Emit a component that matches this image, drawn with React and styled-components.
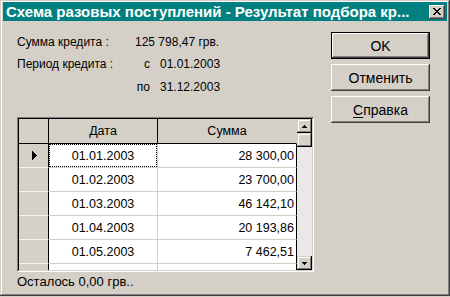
import React from "react";
import styled, { createGlobalStyle } from "styled-components";

const FONT = `"Liberation Sans", Arial, sans-serif`;

const Global = createGlobalStyle`
  html, body { margin: 0; padding: 0; background: #d4d0c8; }
  body { font-family: ${FONT}; }
`;

const Window = styled.div`
  width: 450px;
  height: 296px;
  box-sizing: border-box;
  background: #d4d0c8;
  padding: 2px 3px 3px 3px;
  box-shadow: inset -1px -1px #404040, inset 1px 1px #d4d0c8,
    inset -2px -2px #808080, inset 2px 2px #ffffff;
  display: flex;
  flex-direction: column;
  font-family: ${FONT};
  font-size: 12px;
  color: #000;
`;

const Caption = styled.div`
  height: 19px;
  flex: none;
  background: #008080;
  display: flex;
  align-items: center;
  padding-left: 3px;
  color: #fff;
  font-weight: bold;
  font-size: 15px;
  white-space: nowrap;
`;

const CaptionText = styled.span`
  flex: 1;
  overflow: hidden;
`;

const CloseBox = styled.div`
  width: 16px;
  height: 14px;
  margin-right: 2px;
  box-sizing: border-box;
  background: #d4d0c8;
  box-shadow: inset -1px -1px #404040, inset 1px 1px #ffffff,
    inset -2px -2px #808080;
  display: flex;
  align-items: center;
  justify-content: center;
`;

const Body = styled.div`
  flex: 1;
  display: flex;
`;

const LeftCol = styled.div`
  width: 297px;
  margin-left: 14px;
  display: flex;
  flex-direction: column;
`;

const Info = styled.div`
  margin-top: 14px;
  display: grid;
  grid-template-columns: 118px 15px 1fr;
  grid-template-rows: 22px 23px 14px;
  line-height: 14px;
  font-size: 12px;
  white-space: nowrap;
`;

const Label = styled.div`
  grid-column: 1;
`;

const Value = styled.div`
  grid-column: ${(p) => p.$col};
  text-align: ${(p) => (p.$right ? "right" : "left")};
  padding-left: ${(p) => p.$pad || 0}px;
`;

const Frame = styled.div`
  margin-top: 23px;
  height: 155px;
  box-sizing: border-box;
  border: 1px solid;
  border-color: #808080 #ffffff #ffffff #808080;
`;

const FrameInner = styled.div`
  height: 100%;
  box-sizing: border-box;
  border: 1px solid;
  border-color: #000000 #d4d0c8 #d4d0c8 #000000;
  display: flex;
  overflow: hidden;
`;

const Table = styled.div`
  display: grid;
  grid-template-columns: 30px 109px 139px;
  grid-auto-rows: 24px;
  grid-template-rows: 25px;
  align-content: start;
  overflow: hidden;
  font-size: 12.5px;
`;

const HeadCell = styled.div`
  box-sizing: border-box;
  background: #d4d0c8;
  border-right: 1px solid ${(p) => (p.$last ? "transparent" : "#000")};
  border-bottom: 1px solid #000;
  display: flex;
  align-items: center;
  justify-content: center;
  padding-bottom: 1px;
`;

const IndCell = styled.div`
  box-sizing: border-box;
  background: #d4d0c8;
  border-right: 1px solid #000;
  border-bottom: 1px solid #f4f3f0;
  display: flex;
  align-items: center;
  justify-content: center;
  padding-left: 1px;
`;

const Cell = styled.div`
  position: relative;
  box-sizing: border-box;
  background: #fff;
  border-right: 1px solid ${(p) => (p.$last ? "#000" : "#d4d0c8")};
  border-bottom: 1px solid #d4d0c8;
  display: flex;
  align-items: center;
  justify-content: ${(p) => (p.$right ? "flex-end" : "center")};
  padding-right: ${(p) => (p.$right ? 2 : 0)}px;
  white-space: nowrap;
  &::after {
    content: "";
    display: ${(p) => (p.$focus ? "block" : "none")};
    position: absolute;
    inset: 0;
    border: 1px dotted #000;
  }
`;

const ScrollBar = styled.div`
  width: 15px;
  flex: none;
  background: #eae8e4;
  display: flex;
  flex-direction: column;
`;

const ScrollBtn = styled.div`
  height: 14px;
  flex: none;
  box-sizing: border-box;
  background: #d4d0c8;
  box-shadow: inset -1px -1px #000000, inset 1px 1px #d4d0c8,
    inset -2px -2px #808080, inset 2px 2px #ffffff;
  display: flex;
  align-items: center;
  justify-content: center;
  margin-top: ${(p) => (p.$bottom ? "auto" : "0")};
`;

const Status = styled.div`
  margin-top: 3px;
  line-height: 14px;
  font-size: 13px;
  white-space: nowrap;
`;

const Buttons = styled.div`
  margin-left: 17px;
  margin-top: 11px;
  display: flex;
  flex-direction: column;
  gap: 5px;
`;

const Button = styled.div`
  width: 99px;
  height: 27px;
  box-sizing: border-box;
  background: #d4d0c8;
  border: ${(p) => (p.$default ? "1px solid #000" : "none")};
  box-shadow: inset -1px -1px #404040, inset 1px 1px #ffffff,
    inset -2px -2px #808080, inset 2px 2px #d4d0c8;
  display: flex;
  align-items: center;
  justify-content: center;
  font-size: 14px;
  u {
    text-decoration: underline;
    text-underline-offset: 2px;
  }
`;

const CloseIcon = () => (
  <svg width="8" height="7" viewBox="0 0 8 7" shapeRendering="crispEdges">
    <g fill="#000">
      <rect x="0" y="0" width="2" height="1" />
      <rect x="6" y="0" width="2" height="1" />
      <rect x="1" y="1" width="2" height="1" />
      <rect x="5" y="1" width="2" height="1" />
      <rect x="2" y="2" width="4" height="1" />
      <rect x="3" y="3" width="2" height="1" />
      <rect x="2" y="4" width="4" height="1" />
      <rect x="1" y="5" width="2" height="1" />
      <rect x="5" y="5" width="2" height="1" />
      <rect x="0" y="6" width="2" height="1" />
      <rect x="6" y="6" width="2" height="1" />
    </g>
  </svg>
);

const Arrow = ({ down }) => (
  <svg width="5" height="3" viewBox="0 0 5 3" shapeRendering="crispEdges">
    <g fill="#000" transform={down ? "rotate(180 2.5 1.5)" : undefined}>
      <rect x="2" y="0" width="1" height="1" />
      <rect x="1" y="1" width="3" height="1" />
      <rect x="0" y="2" width="5" height="1" />
    </g>
  </svg>
);

const Pointer = () => (
  <svg width="5" height="9" viewBox="0 0 5 9" shapeRendering="crispEdges">
    <polygon points="0,0 5,4.5 0,9" fill="#000" />
  </svg>
);

const rows = [
  ["01.01.2003", "28 300,00"],
  ["01.02.2003", "23 700,00"],
  ["01.03.2003", "46 142,10"],
  ["01.04.2003", "20 193,86"],
  ["01.05.2003", "7 462,51"],
  ["", ""],
];

export default function App() {
  return (
    <>
      <Global />
      <Window>
        <Caption>
          <CaptionText>Схема разовых поступлений - Результат подбора кр...</CaptionText>
          <CloseBox>
            <CloseIcon />
          </CloseBox>
        </Caption>
        <Body>
          <LeftCol>
            <Info>
              <Label>Сумма кредита :</Label>
              <Value $col="2 / 4">125 798,47 грв.</Value>
              <Label>Период кредита :</Label>
              <Value $col="2" $right>с</Value>
              <Value $col="3" $pad={10}>01.01.2003</Value>
              <Label />
              <Value $col="2" $right>по</Value>
              <Value $col="3" $pad={10}>31.12.2003</Value>
            </Info>
            <Frame>
              <FrameInner>
                <Table>
                  <HeadCell />
                  <HeadCell>Дата</HeadCell>
                  <HeadCell $last>Сумма</HeadCell>
                  {rows.map(([d, s], i) => (
                    <React.Fragment key={i}>
                      <IndCell>{i === 0 && <Pointer />}</IndCell>
                      <Cell $focus={i === 0}>{d}</Cell>
                      <Cell $right $last>{s}</Cell>
                    </React.Fragment>
                  ))}
                </Table>
                <ScrollBar>
                  <ScrollBtn>
                    <Arrow />
                  </ScrollBtn>
                  <ScrollBtn />
                  <ScrollBtn $bottom>
                    <Arrow down />
                  </ScrollBtn>
                </ScrollBar>
              </FrameInner>
            </Frame>
            <Status>Осталось 0,00 грв..</Status>
          </LeftCol>
          <Buttons>
            <Button $default>OK</Button>
            <Button>Отменить</Button>
            <Button>
              <span>
                <u>С</u>правка
              </span>
            </Button>
          </Buttons>
        </Body>
      </Window>
    </>
  );
}
